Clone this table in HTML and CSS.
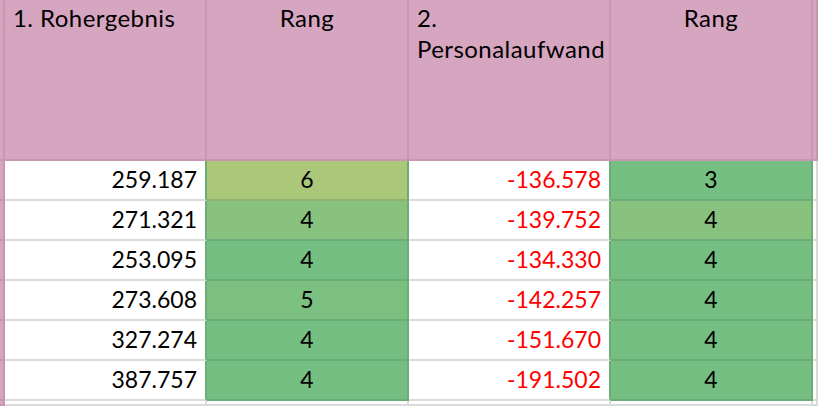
FILE: index.html
```html
<!DOCTYPE html>
<html lang="de">
<head>
<meta charset="utf-8">
<title>Rohergebnis / Personalaufwand</title>
<link rel="stylesheet" href="styles.css">
</head>
<body>
<div class="sheet">
  <div class="cell edge head"></div>
  <div class="cell head text-left">1. Rohergebnis</div>
  <div class="cell head text-center">Rang</div>
  <div class="cell head text-left">2. Personalaufwand</div>
  <div class="cell head text-center">Rang</div>
  <div class="cell head"></div>

  <div class="cell edge"></div>
  <div class="cell num">259.187</div>
  <div class="cell rank g-yellow">6</div>
  <div class="cell num neg">-136.578</div>
  <div class="cell rank g-dark">3</div>
  <div class="cell blank"></div>

  <div class="cell edge"></div>
  <div class="cell num">271.321</div>
  <div class="cell rank g-light">4</div>
  <div class="cell num neg">-139.752</div>
  <div class="cell rank g-light">4</div>
  <div class="cell blank"></div>

  <div class="cell edge"></div>
  <div class="cell num">253.095</div>
  <div class="cell rank g-dark">4</div>
  <div class="cell num neg">-134.330</div>
  <div class="cell rank g-dark">4</div>
  <div class="cell blank"></div>

  <div class="cell edge"></div>
  <div class="cell num">273.608</div>
  <div class="cell rank g-mid">5</div>
  <div class="cell num neg">-142.257</div>
  <div class="cell rank g-dark">4</div>
  <div class="cell blank"></div>

  <div class="cell edge"></div>
  <div class="cell num">327.274</div>
  <div class="cell rank g-dark">4</div>
  <div class="cell num neg">-151.670</div>
  <div class="cell rank g-dark">4</div>
  <div class="cell blank"></div>

  <div class="cell edge"></div>
  <div class="cell num">387.757</div>
  <div class="cell rank g-dark">4</div>
  <div class="cell num neg">-191.502</div>
  <div class="cell rank g-dark">4</div>
  <div class="cell blank"></div>

  <div class="cell edge"></div>
  <div class="cell blank"></div>
  <div class="cell blank"></div>
  <div class="cell blank"></div>
  <div class="cell blank"></div>
  <div class="cell blank"></div>
</div>
</body>
</html>
```
FILE: styles.css
```css
html, body {
  margin: 0;
  padding: 0;
  background: #ffffff;
}

body {
  font-family: "Lato", "Liberation Sans", sans-serif;
  font-size: 23px;
  color: #000000;
  overflow: hidden;
}

.sheet {
  display: grid;
  grid-template-columns: 5px 202px 202px 202px 202px 1fr;
  grid-template-rows: 161px repeat(6, 40px) 1fr;
  width: 818px;
  height: 406px;
}

.cell {
  box-sizing: border-box;
  border-right: 2px solid #dadada;
  border-bottom: 2px solid #dadada;
  background: #ffffff;
  min-width: 0;
  overflow: hidden;
  white-space: nowrap;
}

.edge {
  background: #d6a5c0;
  border-right-color: #c797b0;
  border-bottom-color: #c797b0;
}

.head {
  background: #d6a5c0;
  border-right-color: #c797b0;
  border-bottom-color: #c797b0;
  font-size: 24px;
  letter-spacing: 0.45px;
  line-height: 31px;
  padding-top: 2px;
  white-space: normal;
}

.text-left {
  padding-left: 8px;
  padding-right: 2px;
}

.text-center {
  text-align: center;
}

.num {
  display: flex;
  align-items: center;
  justify-content: flex-end;
  padding-right: 8px;
  padding-bottom: 2px;
  border-right-color: #6cac77;
}

.neg {
  color: #ff0000;
}

.rank {
  display: flex;
  align-items: center;
  justify-content: center;
  padding-bottom: 2px;
  border-right-color: #6cac77;
  border-bottom-color: #6cac77;
}

.g-yellow {
  background: #abc87a;
  border-bottom-color: #8fb36e;
}

.g-light {
  background: #88c27e;
}

.g-mid {
  background: #7bc081;
}

.g-dark {
  background: #76bf82;
}
```
